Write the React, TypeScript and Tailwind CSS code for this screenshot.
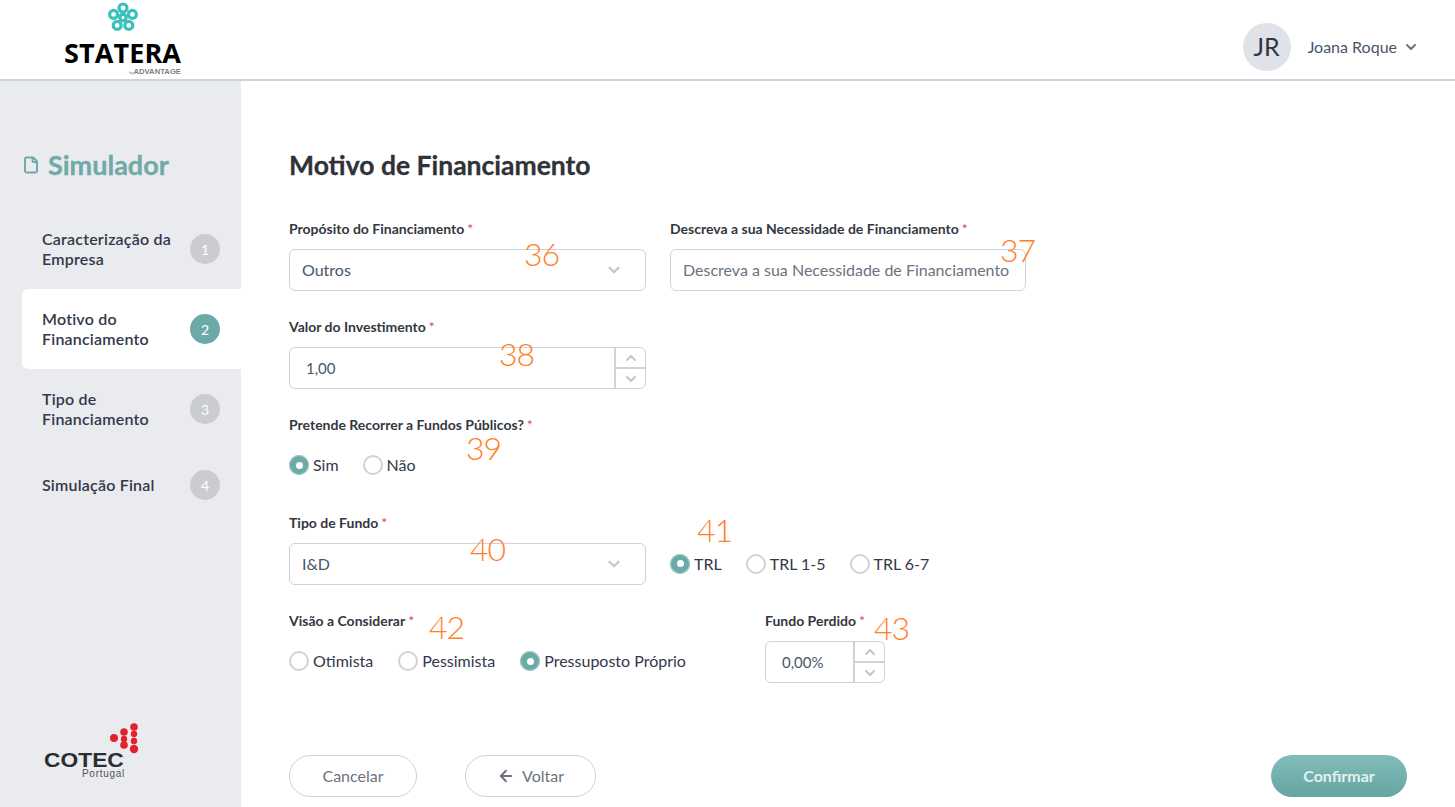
import { ArrowLeft, ChevronDown, ChevronUp, File } from 'lucide-react';

const STEPS = [
  { n: 1, label: ['Caracterização da', 'Empresa'], h: 'h-[80px]' },
  { n: 2, label: ['Motivo do', 'Financiamento'], h: 'h-[80px]', active: true },
  { n: 3, label: ['Tipo de', 'Financiamento'], h: 'h-[80px]' },
  { n: 4, label: ['Simulação Final'], h: 'h-[72px]' },
];

function StateraLogo() {
  return (
    <div className="flex w-[117px] flex-col items-center">
      <svg width="30" height="30" viewBox="0 0 30 30" fill="none" stroke="#3cc0bb" strokeWidth="3.2">
        <circle cx="15" cy="6" r="4" />
        <circle cx="24.4" cy="12.4" r="4" />
        <circle cx="20.8" cy="23.4" r="4" />
        <circle cx="9.2" cy="23.4" r="4" />
        <circle cx="5.6" cy="12.4" r="4" />
        <circle cx="15" cy="15.5" r="3.2" />
      </svg>
      <div className="mt-[9px] h-[24px] font-['Open_Sans'] text-[27px] leading-[24px] font-bold tracking-[0.1px] text-black">STATERA</div>
      <div className="mt-[2px] h-[9px] self-end font-['Liberation_Sans'] text-[7.7px] leading-[9px] font-bold text-[#808080]">
        <span className="text-[4px] font-normal">by</span>ADVANTAGE
      </div>
    </div>
  );
}

function CotecLogo() {
  return (
    <div className="relative h-[60px] w-[100px]">
      <svg className="absolute top-[4px] left-[64px]" width="34" height="34" viewBox="0 0 34 34" fill="#e3202c">
        <circle cx="6" cy="15" r="4" />
        <circle cx="16" cy="9" r="3.8" />
        <circle cx="16" cy="16" r="3.2" />
        <circle cx="16" cy="22" r="3.8" />
        <circle cx="26" cy="4" r="3.8" />
        <circle cx="26" cy="11" r="3.2" />
        <circle cx="26" cy="18" r="3.2" />
        <circle cx="26" cy="26" r="4.2" />
      </svg>
      <div className="absolute top-[33px] left-[0px] origin-left scale-x-[1.14] font-['Liberation_Sans'] text-[20px] leading-[16px] font-bold text-[#2b2d33]">
        COTEC
      </div>
      <div className="absolute top-[50px] left-[38px] font-['Liberation_Sans'] text-[10px] leading-[10px] tracking-[0.7px] text-[#555]">Portugal</div>
    </div>
  );
}

function Sidebar() {
  return (
    <aside className="flex w-[241px] shrink-0 flex-col bg-[#e9ebef] pl-[22px]">
      <div className="mt-[66px] flex h-[36px] items-center gap-[8px]">
        <File size={18} strokeWidth={2.6} className="text-[#6fa9a8]" />
        <span className="text-[27px] font-bold text-[#6fa9a8] [-webkit-text-stroke:0.3px_currentColor]">Simulador</span>
      </div>
      <div className="mt-[26px] flex flex-col">
        {STEPS.map(s => (
          <div
            key={s.n}
            className={`flex ${s.h} items-center justify-between rounded-l-md pr-[21px] pl-[20px] ${s.active ? 'bg-white' : ''}`}
          >
            <div className="text-[16px] leading-[20px] font-semibold tracking-[0.2px] text-[#33384a]">
              {s.label.map(l => (
                <div key={l}>{l}</div>
              ))}
            </div>
            <div
              className={`flex h-[30px] w-[30px] items-center justify-center rounded-full text-[14px] text-white ${s.active ? 'bg-[#6baaa6]' : 'bg-[#caccd2]'}`}
            >
              {s.n}
            </div>
          </div>
        ))}
      </div>
      <div className="mt-auto mb-[28px] ml-[22px]">
        <CotecLogo />
      </div>
    </aside>
  );
}

function Label({ text, flush }: { text: string; flush?: boolean }) {
  return (
    <div className={`${flush ? '' : 'mb-[10px]'} flex h-[20px] items-center gap-[3px] pb-[2px] text-[14px] font-bold text-[#33373f]`}>
      {text}
      <span className="font-normal text-[#d9446f]">*</span>
    </div>
  );
}

function Select({ value }: { value: string }) {
  return (
    <div className="flex h-[42px] w-[357px] items-center justify-between rounded-md border border-[#cfd2da] bg-white pr-[22px] pl-[12px] text-[16px] text-[#4a5568]">
      {value}
      <ChevronDown size={18} strokeWidth={3} className="text-[#c3c6ce]" />
    </div>
  );
}

function Stepper({ value, width, pad }: { value: string; width: string; pad: string }) {
  return (
    <div className={`flex h-[42px] ${width} overflow-hidden rounded-md border border-[#cfd2da] bg-white text-[15px] text-[#4a5568]`}>
      <div className={`flex flex-1 items-center ${pad}`}>{value}</div>
      <div className="flex w-[31px] flex-col border-l-2 border-[#cfd2da]">
        <div className="flex flex-1 items-center justify-center border-b-2 border-[#cfd2da]">
          <ChevronUp size={16} strokeWidth={3} className="text-[#c3c6ce]" />
        </div>
        <div className="flex flex-1 items-center justify-center">
          <ChevronDown size={16} strokeWidth={3} className="text-[#c3c6ce]" />
        </div>
      </div>
    </div>
  );
}

function Radio({ label, checked }: { label: string; checked?: boolean }) {
  return (
    <div className="flex items-center gap-[4px] text-[16px] leading-[24px] text-[#33384a]">
      {checked ? (
        <span className="flex h-[20px] w-[20px] items-center justify-center rounded-full bg-[#6baaa6] ring-1 ring-[#a9cfcc] ring-inset">
          <span className="h-[7px] w-[7px] rounded-full bg-white" />
        </span>
      ) : (
        <span className="h-[20px] w-[20px] rounded-full border-2 border-[#cfd2da] bg-white" />
      )}
      {label}
    </div>
  );
}

function Note({ text, pos }: { text: string; pos: string }) {
  return (
    <span className={`pointer-events-none absolute ${pos} text-[32px] leading-[24px] font-light tracking-[-1px] text-[#ff7f27]`}>
      {text}
    </span>
  );
}

export default function App() {
  return (
    <div className="relative flex h-[807px] w-full flex-col overflow-hidden bg-white font-['Lato',sans-serif]">
      <header className="flex h-[81px] shrink-0 items-start justify-between border-b-2 border-[#cdd2dc] bg-white pr-[36px] pl-[64px]">
        <div className="pt-[2px]">
          <StateraLogo />
        </div>
        <div className="mt-[23px] flex items-center">
          <div className="flex h-[48px] w-[48px] items-center justify-center rounded-full bg-[#dfe2e7] text-[25px] text-[#2f3542]">JR</div>
          <span className="ml-[17px] text-[16px] text-[#4a5568]">Joana Roque</span>
          <ChevronDown size={16} strokeWidth={3} className="ml-[6px] text-[#6b7280]" />
        </div>
      </header>

      <div className="flex min-h-0 flex-1">
        <Sidebar />
        <main className="flex flex-1 flex-col pr-[48px] pl-[48px]">
          <h1 className="mt-[66px] mb-[36px] flex h-[36px] items-center pt-[1px] text-[26.5px] font-bold text-[#2f3237] [-webkit-text-stroke:0.3px_currentColor]">
            Motivo de Financiamento
          </h1>

          <div className="flex gap-[24px]">
            <div>
              <Label text="Propósito do Financiamento" />
              <Select value="Outros" />
            </div>
            <div>
              <Label text="Descreva a sua Necessidade de Financiamento" />
              <div className="flex h-[42px] w-[356px] items-center rounded-md border border-[#cfd2da] bg-white pl-[12px] text-[16px] whitespace-nowrap text-[#6b7280]">
                Descreva a sua Necessidade de Financiamento
              </div>
            </div>
          </div>

          <div className="mt-[26px]">
            <Label text="Valor do Investimento" />
            <Stepper value="1,00" width="w-[357px]" pad="pl-[16px]" />
          </div>

          <div className="mt-[26px]">
            <Label text="Pretende Recorrer a Fundos Públicos?" flush />
            <div className="mt-[18px] flex gap-[24px]">
              <Radio label="Sim" checked />
              <Radio label="Não" />
            </div>
          </div>

          <div className="mt-[36px] flex items-end gap-[24px]">
            <div>
              <Label text="Tipo de Fundo" />
              <Select value="I&D" />
            </div>
            <div className="flex h-[42px] items-center gap-[24px] pb-[1px]">
              <Radio label="TRL" checked />
              <Radio label="TRL 1-5" />
              <Radio label="TRL 6-7" />
            </div>
          </div>

          <div className="mt-[26px] flex">
            <div className="w-[476px]">
              <Label text="Visão a Considerar" flush />
              <div className="mt-[18px] flex gap-[25px]">
                <Radio label="Otimista" />
                <Radio label="Pessimista" />
                <Radio label="Pressuposto Próprio" checked />
              </div>
            </div>
            <div>
              <Label text="Fundo Perdido" />
              <Stepper value="0,00%" width="w-[120px]" pad="pl-[16px]" />
            </div>
          </div>

          <div className="mt-auto mb-[10px] flex items-center">
            <button className="h-[42px] w-[128px] rounded-full border border-[#cfd2da] bg-white text-[16px] text-[#6b7280]">Cancelar</button>
            <button className="ml-[48px] flex h-[42px] w-[131px] items-center justify-center gap-[7px] rounded-full border border-[#cfd2da] bg-white text-[16px] text-[#6b7280]">
              <ArrowLeft size={18} strokeWidth={2.5} />
              Voltar
            </button>
            <button className="ml-auto h-[42px] w-[136px] rounded-full bg-gradient-to-b from-[#82bdb9] to-[#64a5a2] text-[16px] font-bold text-[#e4f0ef]">
              Confirmar
            </button>
          </div>
        </main>
      </div>

      <Note text="36" pos="left-[524px] top-[242px]" />
      <Note text="37" pos="left-[1000px] top-[238px]" />
      <Note text="38" pos="left-[499px] top-[342px]" />
      <Note text="39" pos="left-[466px] top-[436px]" />
      <Note text="40" pos="left-[470px] top-[537px]" />
      <Note text="41" pos="left-[697px] top-[518px]" />
      <Note text="42" pos="left-[429px] top-[615px]" />
      <Note text="43" pos="left-[874px] top-[616px]" />
    </div>
  );
}
